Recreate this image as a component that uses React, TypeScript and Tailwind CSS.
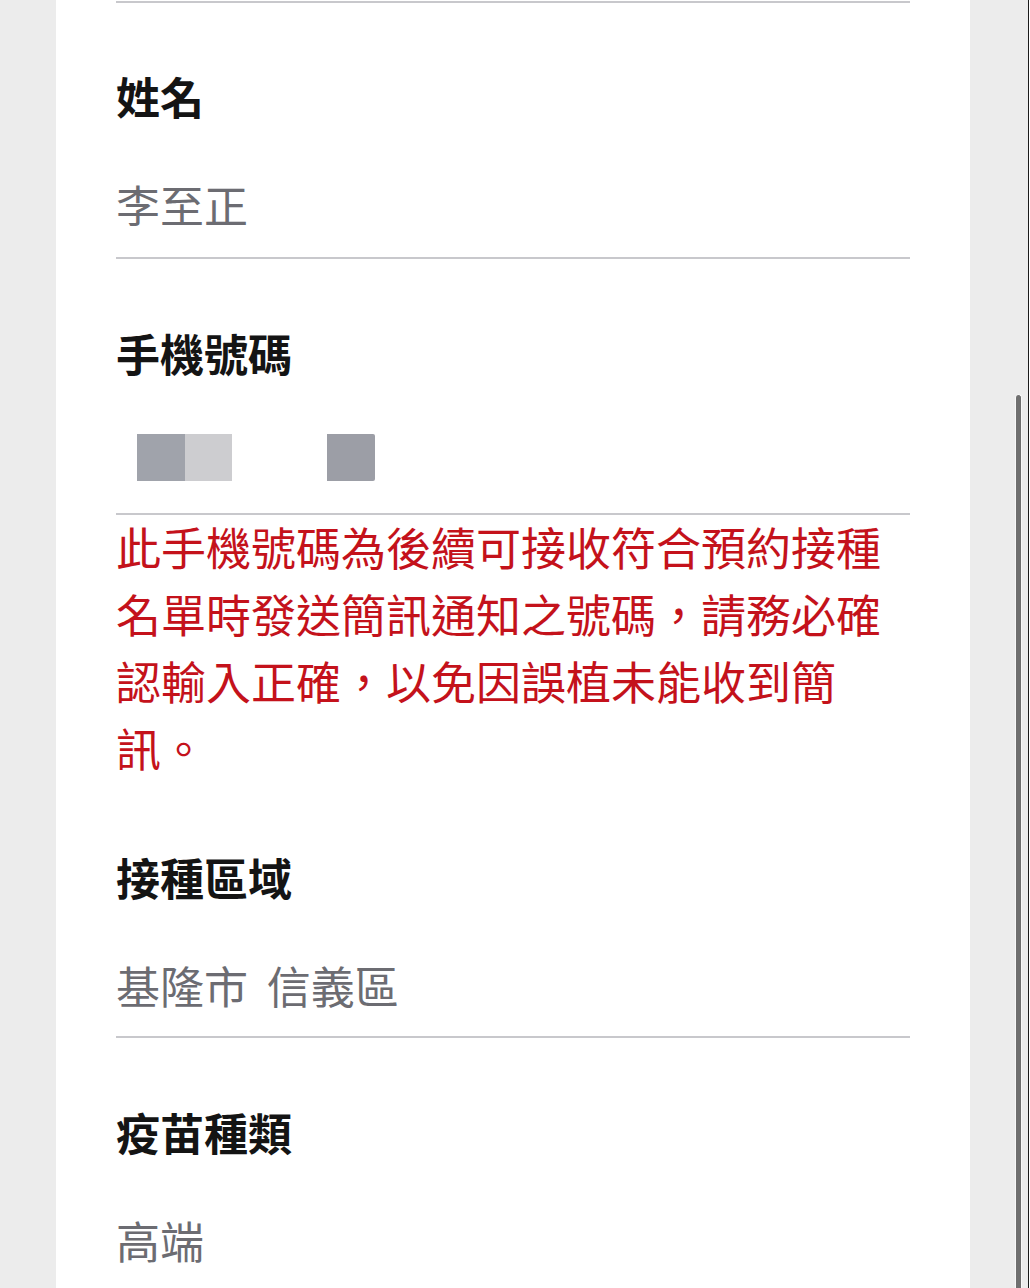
import * as React from "react";

const font = { fontFamily: '"Noto Sans CJK TC", "Noto Sans", sans-serif' };

const Label = ({ text, className }: { text: string; className: string }) => (
  <div className={`text-[44px] leading-[44px] font-bold text-[#141414] ${className}`}>{text}</div>
);

const Value = ({ text, className }: { text: string; className: string }) => (
  <div className={`text-[44px] leading-[44px] text-[#6c6c72] [word-spacing:9px] ${className}`}>{text}</div>
);

const Divider = ({ className = "" }: { className?: string }) => (
  <div className={`h-[2px] bg-[#c8c8cc] ${className}`} />
);

export default function App() {
  return (
    <div className="flex h-[1288px] w-[1030px] overflow-hidden bg-[#ececec]" style={font}>
      <div className="w-[56px] shrink-0" />

      {/* form card */}
      <div className="flex w-[914px] shrink-0 flex-col bg-white px-[60px] pt-[1px]">
        <Divider />

        <Label text="姓名" className="mt-[71px]" />
        <Value text="李至正" className="mt-[64px]" />
        <Divider className="mt-[31px]" />

        <Label text="手機號碼" className="mt-[72px]" />
        <div className="ml-[21px] mt-[59px] flex h-[47px]">
          <div className="w-[48px] bg-[#a0a3ab]" />
          <div className="w-[47px] bg-[#cdcdd0]" />
          <div className="ml-[95px] w-[48px] rounded-r-[2px] bg-[#9c9ea6]" />
        </div>
        <Divider className="mt-[32px]" />

        <p className="-mt-[2px] text-[45px] leading-[67px] text-[#c4121b]">
          此手機號碼為後續可接收符合預約接種名單時發送簡訊通知之號碼，請務必確認輸入正確，以免因誤植未能收到簡訊。
        </p>

        <Label text="接種區域" className="mt-[74px]" />
        <Value text="基隆市 信義區" className="mt-[64px]" />
        <Divider className="mt-[29px]" />

        <Label text="疫苗種類" className="mt-[72px]" />
        <Value text="高端" className="mt-[64px]" />
      </div>

      {/* scrollbar strip */}
      <div className="flex w-[60px] shrink-0">
        <div className="w-[45px]" />
        <div className="flex w-[7px] flex-col">
          <div className="h-[394px]" />
          <div className="flex-1 rounded-t-full border border-b-0 border-[#f8f8f8] bg-[#6f6f6f]" />
        </div>
        <div className="w-[6px]" />
        <div className="w-[1px] bg-[#1a1a1a]" />
        <div className="w-[1px] bg-white" />
      </div>
    </div>
  );
}
